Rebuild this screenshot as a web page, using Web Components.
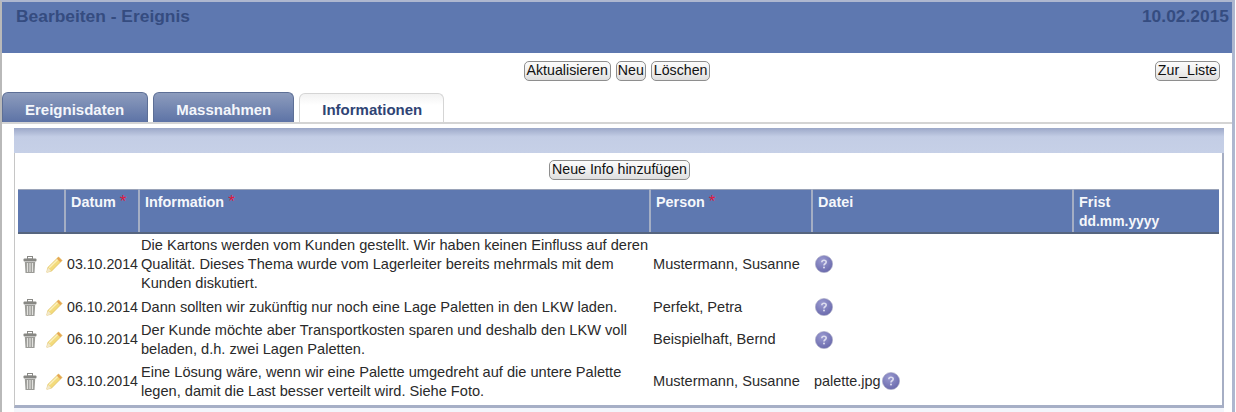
<!DOCTYPE html>
<html lang="de">
<head>
<meta charset="utf-8">
<title>Bearbeiten - Ereignis</title>
<style>
  html, body { margin: 0; padding: 0; width: 1236px; background: #fff; }
  body { font-family: "Liberation Sans", Arial, sans-serif; }
</style>
</head>
<body>
<template id="icon-trash">
  <svg width="14" height="17" viewBox="0 0 14 17">
    <rect x="4.500" y="0.500" width="5" height="2.500" fill="none" stroke="#8a8a86"/>
    <rect x="0.500" y="2.500" width="13" height="3" rx="1" fill="#878783"/>
    <path d="M1.800 6h10.400l-.7 11H2.500z" fill="#9b9b97"/>
    <path d="M4.500 7v9M7 7v9M9.500 7v9" stroke="#e2e2de" stroke-width="1.200"/>
  </svg>
</template>
<template id="icon-pencil">
  <svg width="17" height="17" viewBox="0 0 17 17">
    <path d="M12.500 1 16 4.500 5.400 15.200.8 16.200l1-4.600z" fill="#f3db7c" stroke="#dcbc5a" stroke-width=".7" stroke-linejoin="round"/>
    <path d="M3.200 11.800 12.400 2.800" stroke="#fbf0bc" stroke-width="1.400"/>
    <path d="M12.500 1 16 4.500 14.300 6.200 10.800 2.700z" fill="#e6a654"/>
    <path d="M1.800 11.600 5.400 15.200.8 16.200z" fill="#f2e8cc"/>
  </svg>
</template>
<template id="icon-help">
  <svg width="18" height="18" viewBox="0 0 18 18">
    <defs><radialGradient id="h" cx=".4" cy=".3" r=".8"><stop offset="0" stop-color="#9a9ad0"/><stop offset="1" stop-color="#6464a8"/></radialGradient></defs>
    <circle cx="9" cy="9" r="8.600" fill="url(#h)" stroke="#a9a9c4" stroke-width=".6"/>
    <path d="M6.800 7.300C6.900 5.900 7.800 5.300 9 5.300c1.300 0 2.200.7 2.200 1.800 0 1.600-2.200 1.700-2.200 3.300" fill="none" stroke="#dcdcee" stroke-width="1.600"/>
    <circle cx="9" cy="12.600" r="1" fill="#dcdcee"/>
  </svg>
</template>

<app-page>
  <page-header slot="header" title-text="Bearbeiten - Ereignis" date="10.02.2015"></page-header>
  <action-bar slot="actions">
    <ui-button>Aktualisieren</ui-button>
    <ui-button tight>Neu</ui-button>
    <ui-button>Löschen</ui-button>
    <ui-button slot="end">Zur_Liste</ui-button>
  </action-bar>
  <tab-strip slot="tabs">
    <tab-item>Ereignisdaten</tab-item>
    <tab-item>Massnahmen</tab-item>
    <tab-item active>Informationen</tab-item>
  </tab-strip>
  <info-panel slot="panel">
    <ui-button>Neue Info hinzufügen</ui-button>
    <info-table slot="table"></info-table>
  </info-panel>
</app-page>

<script>
class AppPage extends HTMLElement {
    constructor() {
        super();
        this.attachShadow({ mode: "open" });
        this.shadowRoot.innerHTML = `
        <style>
          :host {
            display: flex;
            flex-direction: column;
            box-sizing: border-box;
            width: 1235px;
            height: 412px;
            overflow: hidden;
            border-top: 2px solid #aeb7cf;
            border-left: 2px solid #b9b9b9;
            border-right: 3px solid #aeb7cf;
            background: #fff;
            font-family: "Liberation Sans", Arial, sans-serif;
          }
        </style>
        <slot name="header"></slot>
        <slot name="actions"></slot>
        <slot name="tabs"></slot>
        <slot name="panel"></slot>
      `;
    }
}

class PageHeader extends HTMLElement {
    constructor() {
        super();
        this.attachShadow({ mode: "open" });
        this.shadowRoot.innerHTML = `
        <style>
          :host {
            display: flex;
            justify-content: space-between;
            box-sizing: border-box;
            height: 51px;
            padding: 5px 3px 0 14px;
            background: #5e78b0;
            color: #354c80;
            font-size: 17.400px;
            font-weight: bold;
            line-height: 19px;
          }
        </style>
        <span id="title"></span><span id="date"></span>
      `;
    }

    connectedCallback() {
        this.shadowRoot.getElementById("title").textContent = this.getAttribute("title-text");
        this.shadowRoot.getElementById("date").textContent = this.getAttribute("date");
    }
}

class ActionBar extends HTMLElement {
    constructor() {
        super();
        this.attachShadow({ mode: "open" });
        this.shadowRoot.innerHTML = `
        <style>
          :host {
            display: grid;
            grid-template-columns: 1fr auto 1fr;
            box-sizing: border-box;
            height: 39px;
            padding: 8px 0 0;
          }
          .mid { display: flex; gap: 5px; grid-column: 2; }
          .end { display: flex; justify-content: flex-end; grid-column: 3; padding-right: 12px; }
        </style>
        <div class="mid"><slot></slot></div>
        <div class="end"><slot name="end"></slot></div>
      `;
    }
}

class UiButton extends HTMLElement {
    constructor() {
        super();
        this.attachShadow({ mode: "open" });
        this.shadowRoot.innerHTML = `
        <style>
          :host { display: inline-block; }
          button {
            display: block;
            box-sizing: border-box;
            height: 20px;
            padding: 0 2px;
            border: 1px solid #8e8e8e;
            border-radius: 5px;
            background: linear-gradient(#fbfbfb, #f0f0f0 50%, #dedede);
            color: #111;
            font: 14.200px/17px "Liberation Sans", Arial, sans-serif;
          }
          :host([tight]) button { padding: 0 1px; }
        </style>
        <button type="button"><slot></slot></button>
      `;
    }
}

class TabStrip extends HTMLElement {
    constructor() {
        super();
        this.attachShadow({ mode: "open" });
        this.shadowRoot.innerHTML = `
        <style>
          :host {
            display: flex;
            align-items: flex-end;
            gap: 5px;
            box-sizing: border-box;
            height: 32px;
            border-bottom: 2px solid #d4d4d4;
          }
        </style>
        <slot></slot>
      `;
    }
}

class TabItem extends HTMLElement {
    constructor() {
        super();
        this.attachShadow({ mode: "open" });
        this.shadowRoot.innerHTML = `
        <style>
          :host {
            display: block;
            box-sizing: border-box;
            height: 30px;
            padding: 8px 22px 0;
            border: 1px solid #5d6f96;
            border-bottom: 0;
            border-radius: 6px 6px 0 0;
            background: linear-gradient(#8d9cbd, #5d73a6);
            color: #f4f6fb;
            font-size: 15px;
            font-weight: bold;
            line-height: 17px;
          }
          :host(:first-child) { padding-right: 23px; }
          :host([active]) {
            height: 29px;
            padding-top: 7px;
            padding-right: 21px;
            border-color: #d5d5d5;
            background: linear-gradient(#f2f2f2, #fff 40%);
            color: #2f4474;
          }
        </style>
        <slot></slot>
      `;
    }
}

class InfoPanel extends HTMLElement {
    constructor() {
        super();
        this.attachShadow({ mode: "open" });
        this.shadowRoot.innerHTML = `
        <style>
          :host {
            display: block;
            box-sizing: border-box;
            margin: 4px 8px 0 12px;
            height: 285px;
            background: #f3f5fb;
          }
          .bar {
            height: 25px;
            background: linear-gradient(#9ca8c8, #c3cde5 35%, #c6d0e7);
          }
          .body {
            box-sizing: border-box;
            height: 255px;
            padding: 7px 0 0 3px;
            background: #fff;
            border-left: 1px solid #c6c6c6;
            border-right: 2px solid #a6aec4;
            border-bottom: 3px solid #a6afc6;
          }
          .add { display: flex; justify-content: center; height: 29px; padding-right: 1px; }
        </style>
        <div class="bar"></div>
        <div class="body">
          <div class="add"><slot></slot></div>
          <slot name="table"></slot>
        </div>
      `;
    }
}

const ROWS = [
    { date: "03.10.2014", info: "Die Kartons werden vom Kunden gestellt. Wir haben keinen Einfluss auf deren<br>Qualität. Dieses Thema wurde vom Lagerleiter bereits mehrmals mit dem<br>Kunden diskutiert.", person: "Mustermann, Susanne", file: "", h: 61 },
    { date: "06.10.2014", info: "Dann sollten wir zukünftig nur noch eine Lage Paletten in den LKW laden.", person: "Perfekt, Petra", file: "", h: 26 },
    { date: "06.10.2014", info: "Der Kunde möchte aber Transportkosten sparen und deshalb den LKW voll<br>beladen, d.h. zwei Lagen Paletten.", person: "Beispielhaft, Bernd", file: "", h: 39 },
    { date: "03.10.2014", info: "Eine Lösung wäre, wenn wir eine Palette umgedreht auf die untere Palette<br>legen, damit die Last besser verteilt wird. Siehe Foto.", person: "Mustermann, Susanne", file: "palette.jpg", h: 44 },
];

class InfoTable extends HTMLElement {
    constructor() {
        super();
        this.attachShadow({ mode: "open" });
        const icon = (id) => document.getElementById(id).innerHTML;
        const body = ROWS.map((r) => `
          <tr style="height:${r.h}px">
            <td class="icons"><span>${icon("icon-trash")}${icon("icon-pencil")}</span></td>
            <td class="date">${r.date}</td>
            <td class="info">${r.info}</td>
            <td class="person">${r.person}</td>
            <td class="file"><span>${r.file}${icon("icon-help")}</span></td>
            <td></td>
          </tr>`).join("");
        this.shadowRoot.innerHTML = `
        <style>
          :host { display: block; }
          table {
            width: 1201px;
            table-layout: fixed;
            border-collapse: collapse;
            color: #2a2a2a;
            font-size: 14.600px;
            line-height: 19px;
          }
          th {
            height: 44px;
            box-sizing: border-box;
            padding: 3px 5px 0;
            background: #5e78b0;
            border-top: 1px solid #9aa3b8;
            border-bottom: 2px solid #56657f;
            border-left: 2px solid #a4aec4;
            color: #f5f7fb;
            font-size: 14.400px;
            font-weight: bold;
            line-height: 19px;
            text-align: left;
            vertical-align: top;
          }
          th:first-child { border-left: 0; }
          th i { color: #e01840; font-style: normal; font-size: 17px; font-weight: normal; line-height: 14px; }
          th small { font-size: 13.900px; }
          td { padding: 0; vertical-align: middle; white-space: nowrap; }
          .icons span { display: flex; align-items: center; gap: 9px; padding-left: 5px; }
          .date { padding-left: 2px; font-size: 14.200px; }
          .info { padding-left: 2px; }
          tr:not(:first-child) .info { padding-top: 1px; }
          .person { padding-left: 3px; }
          .file { padding-left: 2px; font-size: 14.400px; }
          .file span { display: flex; align-items: center; gap: 1px; min-height: 18px; }
          .file svg { margin-left: 1px; }
          svg { display: block; flex: none; }
        </style>
        <table>
          <colgroup>
            <col style="width:47px"><col style="width:74px"><col style="width:511px">
            <col style="width:162px"><col style="width:261px"><col style="width:146px">
          </colgroup>
          <thead>
            <tr>
              <th></th>
              <th>Datum <i>*</i></th>
              <th>Information <i>*</i></th>
              <th>Person <i>*</i></th>
              <th>Datei</th>
              <th>Frist<br><small>dd.mm.yyyy</small></th>
            </tr>
          </thead>
          <tbody>${body}</tbody>
        </table>
      `;
    }
}

customElements.define("app-page", AppPage);
customElements.define("page-header", PageHeader);
customElements.define("action-bar", ActionBar);
customElements.define("ui-button", UiButton);
customElements.define("tab-strip", TabStrip);
customElements.define("tab-item", TabItem);
customElements.define("info-panel", InfoPanel);
customElements.define("info-table", InfoTable);
</script>
</body>
</html>
